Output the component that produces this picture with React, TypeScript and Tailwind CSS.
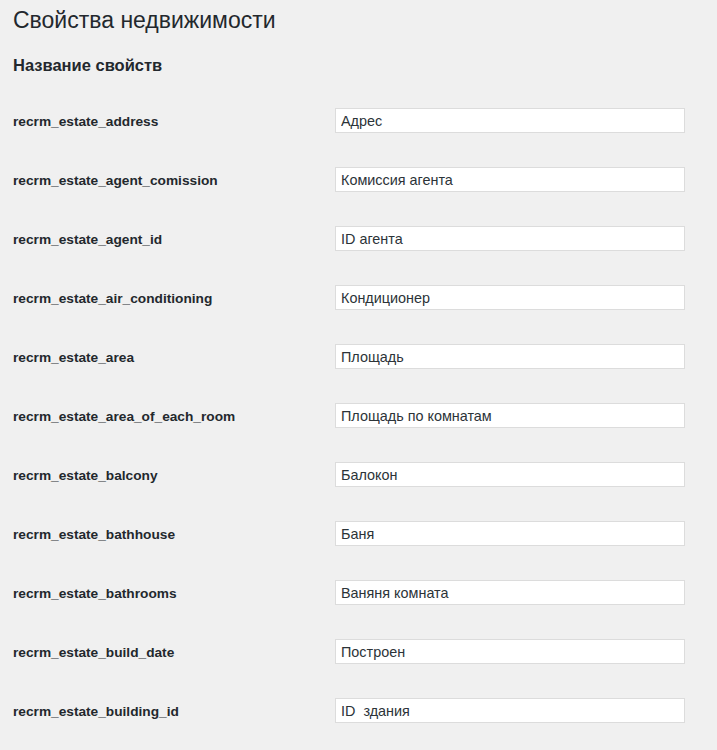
const fields: [string, string][] = [
  ["recrm_estate_address", "Адрес"],
  ["recrm_estate_agent_comission", "Комиссия агента"],
  ["recrm_estate_agent_id", "ID агента"],
  ["recrm_estate_air_conditioning", "Кондиционер"],
  ["recrm_estate_area", "Площадь"],
  ["recrm_estate_area_of_each_room", "Площадь по комнатам"],
  ["recrm_estate_balcony", "Балокон"],
  ["recrm_estate_bathhouse", "Баня"],
  ["recrm_estate_bathrooms", "Ваняня комната"],
  ["recrm_estate_build_date", "Построен"],
  ["recrm_estate_building_id", "ID  здания"],
]

export default function App() {
  return (
    <main className="min-h-screen bg-[#f0f0f0] px-[13px] pt-[5px] text-[#23282d] font-['Liberation_Sans',Arial,sans-serif]">
      <h1 className="text-[23px] leading-[30px] font-normal">Свойства недвижимости</h1>
      <h2 className="mt-[20px] text-[16.5px] leading-[20px] font-bold">Название свойств</h2>

      <div className="mt-[16px]">
        {fields.map(([name, value]) => (
          <div key={name} className="h-[59px] flex items-center">
            <div className="w-[322px] pt-[4px] text-[13.7px] font-bold">{name}</div>
            <input
              type="text"
              defaultValue={value}
              className="w-[350px] h-[25px] bg-white border border-[#dcdcdc] px-[5px] pt-[1px] text-[14.4px] text-[#2c3338] outline-none"
            />
          </div>
        ))}
      </div>
    </main>
  )
}
